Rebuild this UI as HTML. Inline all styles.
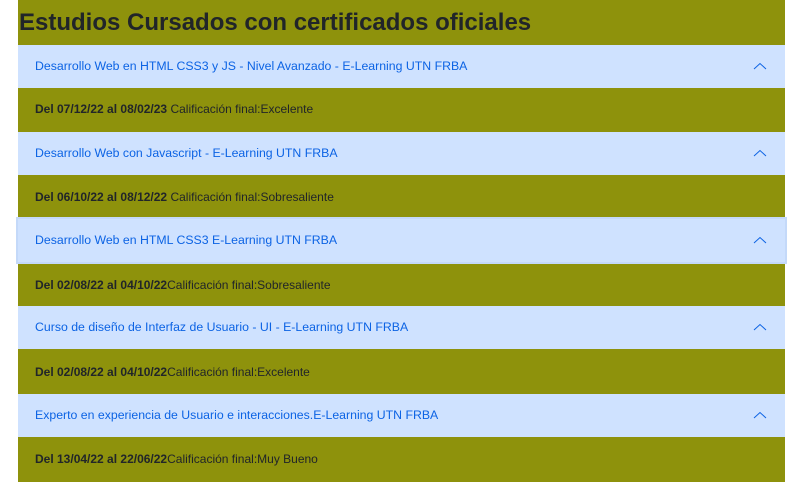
<!DOCTYPE html>
<html><head><style>
body{margin:0;background:#fff;width:789px;height:482px;overflow:hidden;font-family:"Liberation Sans",sans-serif}
.wrap{position:absolute;left:18px;top:0;width:767px;height:482px;background:#8e920c}
h1{margin:0;position:absolute;left:1px;top:9px;font-size:24px;font-weight:bold;color:#212529;letter-spacing:0}
.h{position:absolute;left:0;width:767px;height:43px;background:#cfe2ff;color:#0c63e4;font-size:12.3px;line-height:43px;text-indent:17px}
.h svg{position:absolute;right:18px;top:17px}
.b{position:absolute;left:17px;font-size:12px;color:#212529;line-height:44px}
.b b{font-weight:bold}
.f{box-shadow:0 0 0 2px #c4d9f9;}
</style></head><body><div class="wrap">
<h1>Estudios Cursados con certificados oficiales</h1>
<div class="h" style="top:45px">Desarrollo Web en HTML CSS3 y JS - Nivel Avanzado - E-Learning UTN FRBA<svg width="14" height="9" viewBox="0 0 14 9"><path d="M1 7L7 1.5L13 7" fill="none" stroke="#0c63e4" stroke-width="1"/></svg></div>
<div class="b" style="top:87px"><b>Del 07/12/22 al 08/02/23</b> Calificación final:Excelente</div>
<div class="h" style="top:132px">Desarrollo Web con Javascript - E-Learning UTN FRBA<svg width="14" height="9" viewBox="0 0 14 9"><path d="M1 7L7 1.5L13 7" fill="none" stroke="#0c63e4" stroke-width="1"/></svg></div>
<div class="b" style="top:175px"><b>Del 06/10/22 al 08/12/22</b> Calificación final:Sobresaliente</div>
<div class="h f" style="top:219px">Desarrollo Web en HTML CSS3 E-Learning UTN FRBA<svg width="14" height="9" viewBox="0 0 14 9"><path d="M1 7L7 1.5L13 7" fill="none" stroke="#0c63e4" stroke-width="1"/></svg></div>
<div class="b" style="top:263px"><b>Del 02/08/22 al 04/10/22</b>Calificación final:Sobresaliente</div>
<div class="h" style="top:306px">Curso de diseño de Interfaz de Usuario - UI - E-Learning UTN FRBA<svg width="14" height="9" viewBox="0 0 14 9"><path d="M1 7L7 1.5L13 7" fill="none" stroke="#0c63e4" stroke-width="1"/></svg></div>
<div class="b" style="top:350px"><b>Del 02/08/22 al 04/10/22</b>Calificación final:Excelente</div>
<div class="h" style="top:394px">Experto en experiencia de Usuario e interacciones.E-Learning UTN FRBA<svg width="14" height="9" viewBox="0 0 14 9"><path d="M1 7L7 1.5L13 7" fill="none" stroke="#0c63e4" stroke-width="1"/></svg></div>
<div class="b" style="top:437px"><b>Del 13/04/22 al 22/06/22</b>Calificación final:Muy Bueno</div>
</div></body></html>
